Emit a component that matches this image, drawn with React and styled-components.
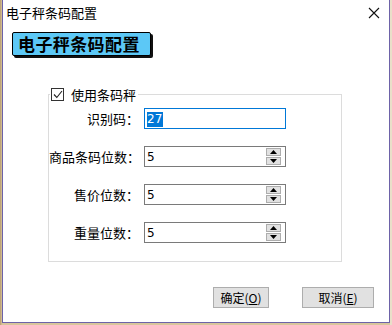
import React from "react";
import styled, { createGlobalStyle } from "styled-components";

const Global = createGlobalStyle`
  html, body { margin: 0; padding: 0; }
  body {
    width: 392px;
    height: 325px;
    overflow: hidden;
    background: #c9b48a;
    font-family: "Noto Sans CJK SC", "Microsoft YaHei", sans-serif;
    font-size: 12px;
    color: #000;
  }
`;

const Desktop = styled.div`
  width: 392px;
  height: 325px;
  padding-left: 2px;
  box-sizing: border-box;
  background: linear-gradient(90deg, #b79a6c 0, #d8c59c 2px, #d8c59c 390px, #e9dfc9 390px);
`;

const Window = styled.div`
  width: 388px;
  height: 323px;
  box-sizing: border-box;
  background: #fff;
  border: 1px solid #6d62a8;
  border-top: none;
  display: flex;
  flex-direction: column;
`;

const TitleBar = styled.div`
  height: 25px;
  display: flex;
  align-items: center;
  justify-content: space-between;
  padding: 0 9px 0 3px;
  font-size: 13px;
`;

const CloseIcon = () => (
  <svg width="12" height="12" viewBox="0 0 12 12">
    <path d="M1 1 L11 11 M11 1 L1 11" stroke="#111" strokeWidth="1.1" />
  </svg>
);

const Banner = styled.div`
  margin: 7px 0 0 9px;
  width: 139px;
  height: 24px;
  box-sizing: border-box;
  background: #5cc8f6;
  border: 1px solid #000;
  border-radius: 2px;
  box-shadow: 2px 2px 0 #111;
  font-size: 17px;
  font-weight: bold;
  line-height: 22px;
  padding-left: 5px;
  letter-spacing: 0.4px;
`;

const Group = styled.fieldset`
  margin: 29px 0 0 45px;
  width: 294px;
  height: 177px;
  box-sizing: border-box;
  border: 1px solid #dcdcdc;
  padding: 4px 0 0 0;
  display: grid;
  grid-template-columns: 95px 142px;
  grid-auto-rows: 21px;
  row-gap: 17px;
  align-content: start;
`;

const Legend = styled.legend`
  display: flex;
  align-items: center;
  gap: 7px;
  padding: 0 2px 0 1px;
  margin-left: 1px;
  font-size: 13px;
`;

const Check = styled.span`
  width: 13px;
  height: 13px;
  box-sizing: border-box;
  border: 1px solid #333;
  display: flex;
  align-items: center;
  justify-content: center;
  background: #fff;
`;

const Label = styled.label`
  text-align: right;
  white-space: nowrap;
  font-size: 13px;
  line-height: 21px;
  padding-right: 5px;
`;

const Field = styled.div`
  box-sizing: border-box;
  border: 1px solid ${(p) => (p.$focus ? "#0078d7" : "#7a7a7a")};
  height: 21px;
  display: flex;
  align-items: center;
  padding: 0 4px 0 2px;
  font-family: "DejaVu Sans", sans-serif;
  font-size: 12px;
`;

const Value = styled.span`
  flex: 1;
  span {
    background: ${(p) => (p.$selected ? "#0078d7" : "transparent")};
    color: ${(p) => (p.$selected ? "#fff" : "#000")};
    padding: 0 1px 1px 0;
  }
`;

const Spin = styled.div`
  display: flex;
  flex-direction: column;
  gap: 1px;
`;

const SpinBtn = styled.div`
  width: 13px;
  height: 6px;
  background: #e1e1e1;
  border: 1px solid #adadad;
  display: flex;
  align-items: center;
  justify-content: center;
`;

const Arrow = ({ up }) => (
  <svg width="7" height="4" viewBox="0 0 7 4">
    <path d={up ? "M0 4 L3.5 0 L7 4 Z" : "M0 0 L3.5 4 L7 0 Z"} fill="#000" />
  </svg>
);

const Footer = styled.div`
  margin-top: auto;
  padding: 0 15px 14px 0;
  display: flex;
  justify-content: flex-end;
  gap: 33px;
`;

const Button = styled.button`
  width: ${(p) => p.$w}px;
  height: 21px;
  box-sizing: border-box;
  background: #e1e1e1;
  border: 1px solid #adadad;
  font-family: "Noto Sans CJK SC", sans-serif;
  font-size: 12px;
  padding: 0;
  line-height: 19px;
  u { text-decoration: underline; }
`;

const rows = [
  { label: "识别码：", value: "27", focus: true },
  { label: "商品条码位数：", value: "5" },
  { label: "售价位数：", value: "5" },
  { label: "重量位数：", value: "5" },
];

const App = () => {
  return (
    <Desktop>
      <Global />
      <Window>
        <TitleBar>
          <span>电子秤条码配置</span>
          <CloseIcon />
        </TitleBar>
        <Banner>电子秤条码配置</Banner>
        <Group>
          <Legend>
            <Check>
              <svg width="10" height="9" viewBox="0 0 10 9">
                <path d="M1 4.5 L3.8 7.5 L9 1" stroke="#222" strokeWidth="1.1" fill="none" />
              </svg>
            </Check>
            使用条码秤
          </Legend>
          {rows.map((r) => (
            <React.Fragment key={r.label}>
              <Label>{r.label}</Label>
              <Field $focus={r.focus}>
                <Value $selected={r.focus}>
                  <span>{r.value}</span>
                </Value>
                {!r.focus && (
                  <Spin>
                    <SpinBtn><Arrow up /></SpinBtn>
                    <SpinBtn><Arrow /></SpinBtn>
                  </Spin>
                )}
              </Field>
            </React.Fragment>
          ))}
        </Group>
        <Footer>
          <Button $w={56}>确定(<u>O</u>)</Button>
          <Button $w={72}>取消(<u>E</u>)</Button>
        </Footer>
      </Window>
    </Desktop>
  );
};

export default App;
